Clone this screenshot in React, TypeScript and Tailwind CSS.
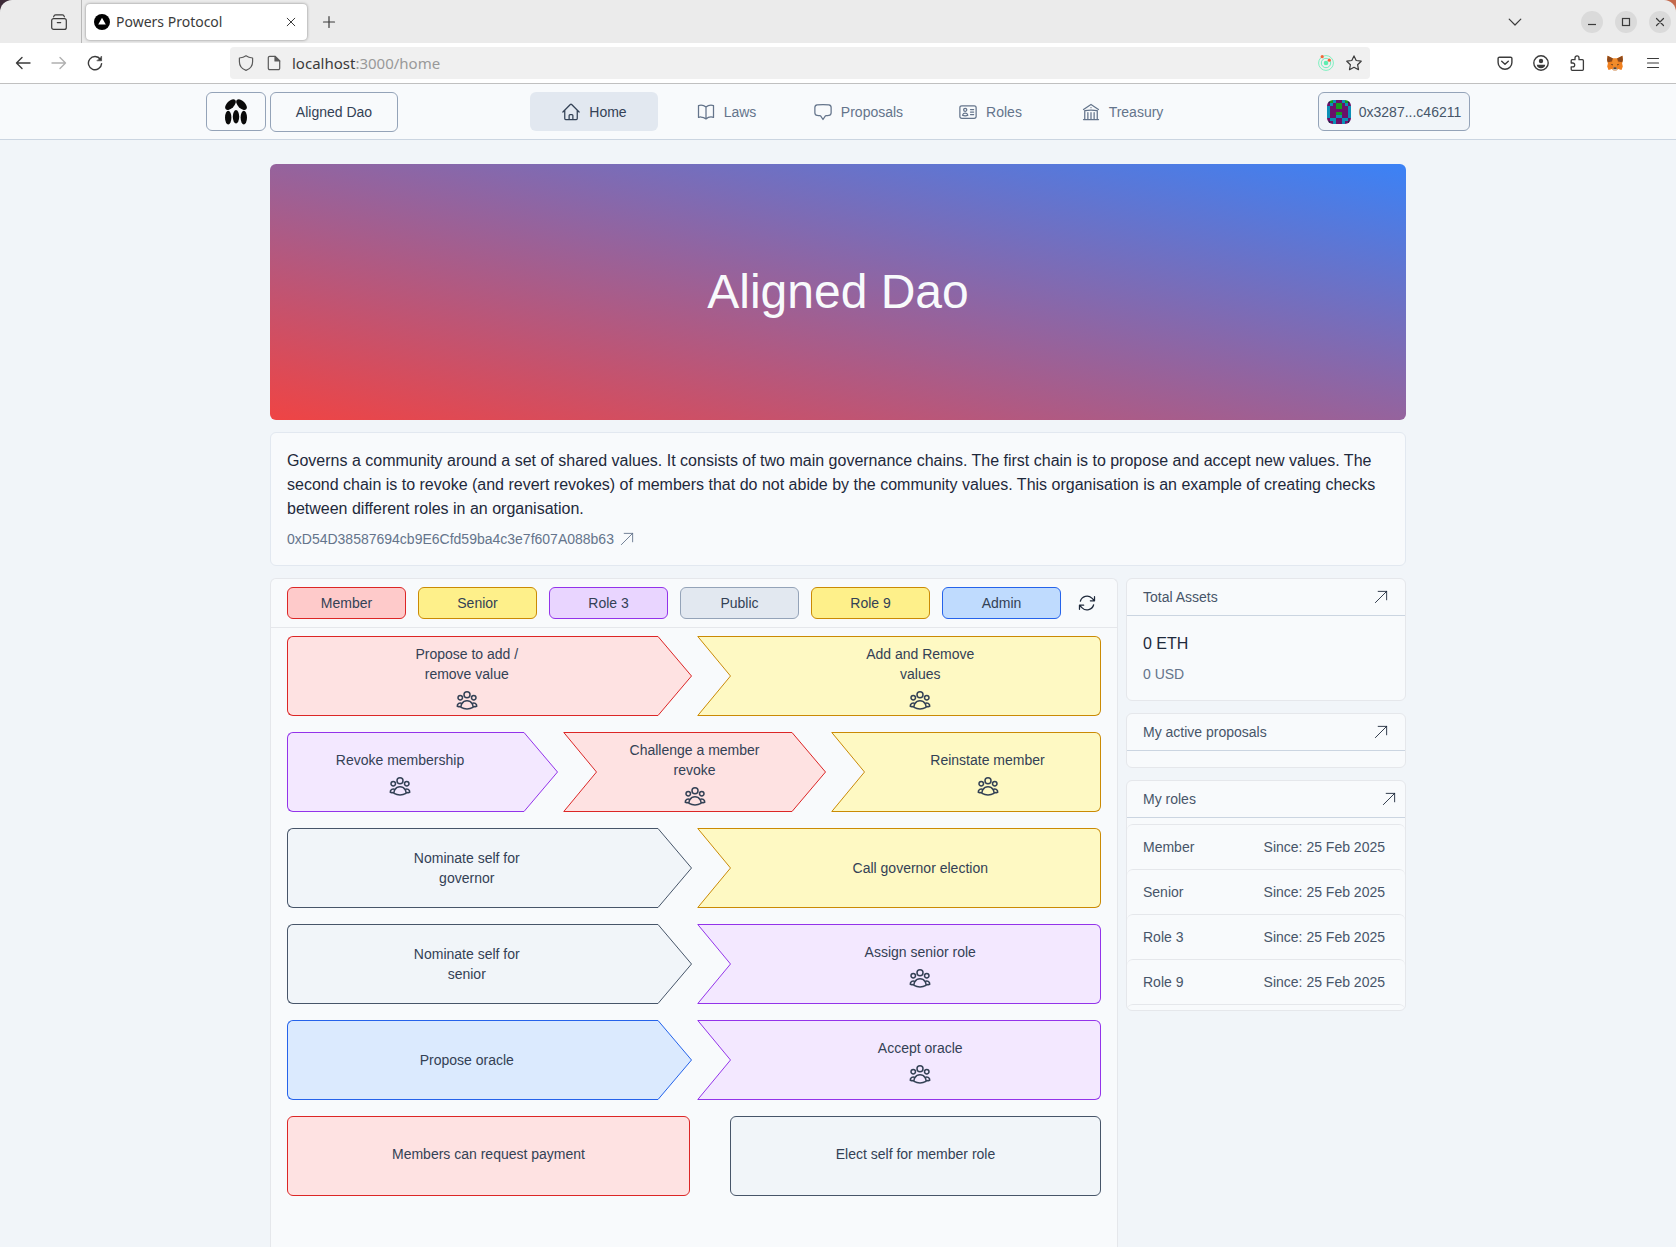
import type { ReactNode } from "react";
import {
  HiOutlineArrowPath,
  HiOutlineArrowUpRight,
  HiOutlineBookOpen,
  HiOutlineBuildingLibrary,
  HiOutlineChatBubbleBottomCenter,
  HiOutlineHome,
  HiOutlineIdentification,
  HiOutlineUserGroup,
} from "react-icons/hi2";

/* ---------- browser chrome ---------- */

function Glyph({ children, className = "" }: { children: ReactNode; className?: string }) {
  return (
    <svg
      viewBox="0 0 16 16"
      className={`size-4 shrink-0 ${className}`}
      fill="none"
      stroke="currentColor"
      strokeWidth="1.2"
      strokeLinecap="round"
      strokeLinejoin="round"
      aria-hidden="true"
    >
      {children}
    </svg>
  );
}

function ChromeButton({ label, children, className = "" }: { label: string; children: ReactNode; className?: string }) {
  return (
    <button type="button" aria-label={label} className={`flex shrink-0 items-center justify-center ${className}`}>
      {children}
    </button>
  );
}

function TabBar() {
  return (
    <div className="bg-linear-to-r from-[#3d2b38] to-[#c4694c]">
      <div className="flex h-[43px] items-center rounded-t-xl bg-[#ebebeb] text-[#3b3b3b]">
        <div className="flex h-full w-[82px] shrink-0 items-center justify-end border-r border-[#b8b8b8] pr-3.5">
          <ChromeButton label="Recent browsing" className="size-4">
            <Glyph>
              <rect x=".7" y="4.6" width="14.6" height="10.8" rx="2" />
              <path d="M2.6 2.8c.3-1 .9-1.9 2-1.9h6.8c1.1 0 1.7.9 2 1.9M6.3 8.6h3.4" />
            </Glyph>
          </ChromeButton>
        </div>
        <div className="ml-1 flex h-9 w-[221px] items-center rounded bg-white pr-2 pl-2 shadow-[0_0_3px_rgba(0,0,0,0.45)]">
          <svg viewBox="0 0 16 16" className="size-4 shrink-0" aria-hidden="true">
            <circle cx="8" cy="8" r="8" fill="#000" />
            <path d="M8 3.7 11.8 10.6H4.2z" fill="#fff" />
          </svg>
          <span className="ml-1.5 grow text-sm">Powers Protocol</span>
          <ChromeButton label="Close tab" className="size-4">
            <Glyph>
              <path d="M4.2 4.2 11.8 11.8M11.8 4.2 4.2 11.8" strokeWidth="1" />
            </Glyph>
          </ChromeButton>
        </div>
        <ChromeButton label="New tab" className="ml-3.5 size-4">
          <Glyph>
            <path d="M8 2.5v11M2.5 8h11" />
          </Glyph>
        </ChromeButton>
        <div className="ml-auto flex items-center pr-[5px]">
          <ChromeButton label="List all tabs" className="mr-[58px] size-4">
            <Glyph>
              <path d="M2.2 5.2 8 11l5.8-5.8" />
            </Glyph>
          </ChromeButton>
          <div className="flex gap-3">
            <ChromeButton label="Minimize" className="size-[22px] rounded-full bg-[#dadada]">
              <Glyph>
                <path d="M4 10.5h8" strokeLinecap="butt" />
              </Glyph>
            </ChromeButton>
            <ChromeButton label="Maximize" className="size-[22px] rounded-full bg-[#dadada]">
              <Glyph>
                <rect x="4.5" y="4.5" width="7" height="7" strokeLinejoin="miter" />
              </Glyph>
            </ChromeButton>
            <ChromeButton label="Close window" className="size-[22px] rounded-full bg-[#dadada]">
              <Glyph>
                <path d="m4.5 4.5 7 7M11.5 4.5l-7 7" />
              </Glyph>
            </ChromeButton>
          </div>
        </div>
      </div>
    </div>
  );
}

function FoxIcon() {
  return (
    <svg viewBox="0 0 16 16" className="size-4" aria-hidden="true">
      <path d="M.6.8 6 3.6h4L15.4.8l.5 4.2-.8 3.2.7 3.4-1.3 3.4-3.4-.9L9.4 15.6H6.6L4.9 14.1l-3.4.9L.2 11.6l.7-3.4L.1 5z" fill="#f0801f" />
      <path d="M.6.8 6 3.6 5 6.6.7 7.2.1 5zM15.4.8 10 3.6l1 3 4.3.6.6-2.2z" fill="#8d4a1c" />
      <path d="m6 3.6 4 0 .8 4.2-.6 3.6H5.8L5.200 7.800z" fill="#f08c2c" />
      <path d="m3.800 9 2 .3-.3 1.200zM12.200 9l-2 .3.300 1.200z" fill="#3a2b22" />
      <path d="M6.300 12.400 5.700 14l.9 1.500h2.800l.9-1.500-.6-1.600z" fill="#cfc0b4" />
      <path d="M6.700 12.400h2.600l.3 1.400H6.400z" fill="#1f1a17" />
    </svg>
  );
}

function Toolbar() {
  return (
    <div className="flex h-[41px] items-center border-b border-[#c0c0c0] bg-white text-[#3b3b3b]">
      <div className="flex w-[230px] shrink-0 items-center gap-5 pl-[15px]">
        <ChromeButton label="Back">
          <Glyph>
            <path d="M15 8H1.500M7 2.500 1.500 8 7 13.500" strokeWidth="1.400" />
          </Glyph>
        </ChromeButton>
        <ChromeButton label="Forward" className="text-[#b0b0b0]">
          <Glyph>
            <path d="M1 8h13.500M9 2.500 14.500 8 9 13.500" strokeWidth="1.400" />
          </Glyph>
        </ChromeButton>
        <ChromeButton label="Reload">
          <Glyph>
            <path d="M13.400 4.300A6.600 6.600 0 1 0 14.600 8.600" strokeWidth="1.400" />
            <path d="M14.600 1.400v4.400h-4.400z" fill="currentColor" stroke="currentColor" strokeWidth=".6" />
          </Glyph>
        </ChromeButton>
      </div>
      <div className="flex h-8 grow items-center rounded bg-[#f0f0f0] px-2">
        <Glyph className="text-[#5a5a5a]">
          <path d="M8 .8c2 1.500 4.200 2 6.600 2.200v3.800c0 3.900-2.600 7.200-6.600 8.600-4-1.400-6.600-4.700-6.600-8.600V3C3.800 2.800 6 2.300 8 .8z" />
        </Glyph>
        <Glyph className="ml-3 text-[#5a5a5a]">
          <path d="M3.700 1.300h5.500l4.500 4.500v7.500a1.400 1.400 0 0 1-1.400 1.400H3.700a1.400 1.400 0 0 1-1.400-1.400V2.700a1.400 1.400 0 0 1 1.400-1.400z" />
          <path d="M9 1.300v4.700h4.700z" fill="currentColor" />
        </Glyph>
        <div className="ml-2.5 grow text-[15px] leading-5">
          localhost<span className="text-[#999]">:3000/home</span>
        </div>
        <svg viewBox="0 0 16 16" className="size-4 shrink-0" fill="none" aria-hidden="true">
          <circle cx="8" cy="8" r="7.400" stroke="#7ff0c0" />
          <circle cx="8" cy="8" r="4.700" stroke="#6feec0" />
          <circle cx="8" cy="8" r="2.300" fill="#5fedb0" />
          <circle cx="4.200" cy="1.700" r="1.600" fill="#f2673a" />
          <circle cx="11.300" cy="5.200" r="1.600" fill="#f2673a" />
        </svg>
        <ChromeButton label="Bookmark this page" className="ml-3">
          <Glyph>
            <path d="m8 .9 2.200 4.600 5 .7-3.600 3.500.9 5L8 12.300l-4.500 2.400.9-5L.8 6.200l5-.7z" />
          </Glyph>
        </ChromeButton>
      </div>
      <div className="flex w-[306px] shrink-0 items-center justify-end gap-5 pr-[15px]">
        <ChromeButton label="Save to Pocket">
          <Glyph>
            <path d="M2.500 2.200h11a1.400 1.400 0 0 1 1.400 1.400v3.800a6.900 6.900 0 0 1-13.800 0V3.600a1.400 1.400 0 0 1 1.400-1.400z" strokeWidth="1.400" />
            <path d="M4.700 6.200 8 9.200l3.300-3" strokeWidth="1.400" />
          </Glyph>
        </ChromeButton>
        <ChromeButton label="Account">
          <Glyph>
            <circle cx="8" cy="8" r="7.200" strokeWidth="1.400" />
            <circle cx="8" cy="6" r="2.200" fill="currentColor" stroke="none" />
            <path d="M3.800 9.700h8.400c0 2-1.800 3.600-4.200 3.600s-4.200-1.600-4.200-3.600z" fill="currentColor" stroke="none" />
          </Glyph>
        </ChromeButton>
        <ChromeButton label="Extensions">
          <Glyph>
            <path
              d="M6 4.700V2.900a2 2 0 0 1 4 0v1.800h3.400c.6 0 1 .4 1 1v8.600c0 .6-.4 1-1 1H3.200c-.6 0-1-.4-1-1v-2.500h1.600a1.900 1.900 0 0 0 0-3.800H2.200V5.700c0-.6.4-1 1-1z"
              strokeWidth="1.300"
            />
          </Glyph>
        </ChromeButton>
        <ChromeButton label="Wallet extension" className="ml-0.5">
          <FoxIcon />
        </ChromeButton>
        <ChromeButton label="Menu" className="ml-0.5">
          <Glyph>
            <path d="M2.500 3.500h11M2.500 8h11M2.500 12.500h11" />
          </Glyph>
        </ChromeButton>
      </div>
    </div>
  );
}

/* ---------- application header ---------- */

function Logo() {
  return (
    <svg viewBox="0 0 22 26" className="h-[26px] w-[22px]" fill="#0a0a0a" aria-hidden="true">
      <ellipse cx="5.500" cy="5.600" rx="6.600" ry="3.600" transform="rotate(-45 5.500 5.600)" />
      <ellipse cx="16.500" cy="5.600" rx="6.600" ry="3.600" transform="rotate(45 16.500 5.600)" />
      <ellipse cx="3.200" cy="18.600" rx="3.200" ry="6.800" />
      <ellipse cx="11" cy="17.800" rx="3.200" ry="6.800" />
      <ellipse cx="18.800" cy="18.600" rx="3.200" ry="6.800" />
    </svg>
  );
}

const BLOCKS = ["dgtp", "ptpg", "tppg", "tppp", "tppg", "tppt", "pttp", "dptp"];
const BLOCK_COLOURS: Record<string, string> = { p: "#6a1069", t: "#0b8fb6", g: "#159a1f", d: "#2b1c4a" };

function Identicon() {
  return (
    <svg viewBox="0 0 8 8" className="size-6 shrink-0 rounded-md" shapeRendering="crispEdges" aria-hidden="true">
      {BLOCKS.map((half, y) =>
        (half + half.split("").reverse().join(""))
          .split("")
          .map((c, x) => <rect key={`${x}-${y}`} x={x} y={y} width="1" height="1" fill={BLOCK_COLOURS[c]} />),
      )}
    </svg>
  );
}

const NAV = [
  { label: "Home", Icon: HiOutlineHome, active: true },
  { label: "Laws", Icon: HiOutlineBookOpen },
  { label: "Proposals", Icon: HiOutlineChatBubbleBottomCenter },
  { label: "Roles", Icon: HiOutlineIdentification },
  { label: "Treasury", Icon: HiOutlineBuildingLibrary },
];

function AppHeader() {
  return (
    <header className="flex h-14 justify-center border-b border-[#cbd5e1] bg-[#f8fafc] px-4 pt-2 text-sm">
      <div className="flex w-full max-w-[1264px] items-start justify-between">
        <div className="flex gap-1">
          <a href="#start" aria-label="Start page" className="flex h-[39px] w-[60px] items-center justify-center rounded-md border border-[#94a3b8]">
            <Logo />
          </a>
          <button type="button" className="h-10 w-32 rounded-md border border-[#94a3b8] text-[#334155]">
            Aligned Dao
          </button>
        </div>
        <nav className="flex gap-1">
          {NAV.map(({ label, Icon, active }) => (
            <a
              key={label}
              href={`#${label.toLowerCase()}`}
              className={`flex h-[39px] w-32 items-center justify-center gap-2 rounded-md ${
                active ? "bg-[#e2e8f0] text-[#334155]" : "text-[#64748b]"
              }`}
            >
              <Icon className="size-5" />
              {label}
            </a>
          ))}
        </nav>
        <button
          type="button"
          className="flex h-[39px] w-[152px] items-center justify-center gap-2 rounded-md border border-[#94a3b8] bg-[#f1f5f9] text-[#475569]"
        >
          <Identicon />
          0x3287...c46211
        </button>
      </div>
    </header>
  );
}

/* ---------- law chains ---------- */

type Tone = "red" | "yellow" | "purple" | "slate" | "blue";
type Shape = "start" | "middle" | "end" | "box";
type Law = { title: string; tone: Tone; vote?: boolean };

const TONES: Record<Tone, { box: string; drawing: string }> = {
  red: { box: "bg-[#fee2e2] border-[#dc2626]", drawing: "fill-[#fee2e2] stroke-[#dc2626]" },
  yellow: { box: "bg-[#fef9c3] border-[#ca8a04]", drawing: "fill-[#fef9c3] stroke-[#ca8a04]" },
  purple: { box: "bg-[#f3e8ff] border-[#9333ea]", drawing: "fill-[#f3e8ff] stroke-[#9333ea]" },
  slate: { box: "bg-[#f1f5f9] border-[#475569]", drawing: "fill-[#f1f5f9] stroke-[#475569]" },
  blue: { box: "bg-[#dbeafe] border-[#2563eb]", drawing: "fill-[#dbeafe] stroke-[#2563eb]" },
};

const BODY: Record<Shape, string> = {
  start: "rounded-l-md border-y border-l pr-3",
  middle: "border-y",
  end: "rounded-r-md border-y border-r pl-2.5",
  box: "rounded-md border pb-1",
};

const CHAINS: Law[][] = [
  [
    { title: "Propose to add / remove value", tone: "red", vote: true },
    { title: "Add and Remove values", tone: "yellow", vote: true },
  ],
  [
    { title: "Revoke membership", tone: "purple", vote: true },
    { title: "Challenge a member revoke", tone: "red", vote: true },
    { title: "Reinstate member", tone: "yellow", vote: true },
  ],
  [
    { title: "Nominate self for governor", tone: "slate" },
    { title: "Call governor election", tone: "yellow" },
  ],
  [
    { title: "Nominate self for senior", tone: "slate" },
    { title: "Assign senior role", tone: "purple", vote: true },
  ],
  [
    { title: "Propose oracle", tone: "blue" },
    { title: "Accept oracle", tone: "purple", vote: true },
  ],
];

function LawItem({ law, shape }: { law: Law; shape: Shape }) {
  const tone = TONES[law.tone];
  return (
    <button type="button" className="flex h-20 min-w-0 text-sm text-[#334155]">
      {(shape === "middle" || shape === "end") && (
        <svg viewBox="0 0 34 80" className={`h-20 w-[34px] shrink-0 ${tone.drawing}`} aria-hidden="true">
          <path d="M0 0H34V80H0L34 40Z" stroke="none" />
          <path d="M34 .5H.8L33.500 40 .8 79.500H34" fill="none" />
        </svg>
      )}
      <span className={`flex h-20 grow flex-col items-center justify-center ${tone.box} ${BODY[shape]}`}>
        <span className={`flex flex-col items-center gap-1 ${law.vote ? "pt-1" : ""}`}>
          <span className={shape === "box" ? "" : "w-[140px]"}>{law.title}</span>
          {law.vote && <HiOutlineUserGroup className="size-6" />}
        </span>
      </span>
      {(shape === "start" || shape === "middle") && (
        <svg viewBox="0 0 34 80" className={`h-20 w-[34px] shrink-0 ${tone.drawing}`} aria-hidden="true">
          <path d="M0 0 33.500 40 0 80Z" stroke="none" />
          <path d="M0 .5 33.500 40 0 79.500" fill="none" />
        </svg>
      )}
    </button>
  );
}

const ROLE_FILTERS = [
  { label: "Member", style: "bg-[#fecaca] border-[#dc2626]" },
  { label: "Senior", style: "bg-[#fef08a] border-[#ca8a04]" },
  { label: "Role 3", style: "bg-[#e9d5ff] border-[#9333ea]" },
  { label: "Public", style: "bg-[#e2e8f0] border-[#94a3b8]" },
  { label: "Role 9", style: "bg-[#fef08a] border-[#ca8a04]" },
  { label: "Admin", style: "bg-[#bfdbfe] border-[#2563eb]" },
];

function LawsPanel() {
  return (
    <section className="flex min-w-0 grow flex-col rounded-t-md border border-b-0 border-[#e5e7eb] bg-[#f8fafc]">
      <div className="flex gap-3 border-b border-[#e5e7eb] px-4 py-2">
        {ROLE_FILTERS.map(({ label, style }) => (
          <button key={label} type="button" className={`h-8 flex-1 rounded-md border text-sm text-[#334155] ${style}`}>
            {label}
          </button>
        ))}
        <button type="button" aria-label="Refresh" className="flex h-8 w-7 items-center justify-center text-[#1e293b]">
          <HiOutlineArrowPath className="size-5" />
        </button>
      </div>
      <div className="flex flex-col gap-4 px-4 pt-2 pb-12">
        {CHAINS.map((laws) => (
          <div
            key={laws[0].title}
            className={`grid gap-[5px] ${laws.length === 3 ? "grid-cols-[271fr_263fr_270fr]" : "grid-cols-2"}`}
          >
            {laws.map((law, i) => (
              <LawItem key={law.title} law={law} shape={i === 0 ? "start" : i === laws.length - 1 ? "end" : "middle"} />
            ))}
          </div>
        ))}
        <div className="grid grid-cols-[403fr_371fr] gap-10">
          <LawItem law={{ title: "Members can request payment", tone: "red" }} shape="box" />
          <LawItem law={{ title: "Elect self for member role", tone: "slate" }} shape="box" />
        </div>
      </div>
    </section>
  );
}

/* ---------- side column ---------- */

function SideCard({ title, inset = "pr-[15px]", children }: { title: string; inset?: string; children: ReactNode }) {
  return (
    <section className="overflow-hidden rounded-md border border-[#e5e7eb] bg-[#f8fafc] text-sm text-[#475569]">
      <a href="#more" className={`flex h-[37px] items-center justify-between border-b border-[#cbd5e1] pl-4 ${inset}`}>
        {title}
        <HiOutlineArrowUpRight className="size-[18px] text-[#1e293b]" strokeWidth={1.2} />
      </a>
      {children}
    </section>
  );
}

function SideColumn() {
  return (
    <aside className="flex w-[280px] shrink-0 flex-col gap-3">
      <SideCard title="Total Assets">
        <div className="flex flex-col gap-2 p-4">
          <p className="text-base text-[#1e293b]">0 ETH</p>
          <p className="text-[#64748b]">0 USD</p>
        </div>
      </SideCard>
      <SideCard title="My active proposals">
        <div className="h-4" />
      </SideCard>
      <SideCard title="My roles" inset="pr-[7px]">
        <ul className="pt-1.5">
          {["Member", "Senior", "Role 3", "Role 9"].map((role) => (
            <li key={role} className="flex h-[45px] items-center justify-between rounded-t-md border-t border-[#e5e7eb] pr-5 pl-4">
              <span>{role}</span>
              <span>Since: 25 Feb 2025</span>
            </li>
          ))}
        </ul>
        <div className="h-1.5 rounded-t-md border-t border-[#e5e7eb]" />
      </SideCard>
    </aside>
  );
}

export default function App() {
  return (
    <div className="flex min-h-screen flex-col bg-[#f1f5f9] font-['Liberation_Sans',Arial,sans-serif]">
      <div className="font-['Noto_Sans',sans-serif]">
        <TabBar />
        <Toolbar />
      </div>
      <AppHeader />
      <main className="mx-auto flex w-full max-w-[1136px] grow flex-col gap-3 pt-6">
        <div className="flex h-64 items-center justify-center rounded-md bg-linear-to-tr/srgb from-[#ef4444] to-[#3b82f6]">
          <h1 className="text-5xl text-[#f8fafc]">Aligned Dao</h1>
        </div>
        <section className="flex flex-col gap-2 rounded-md border border-[#e2e8f0] bg-[#f8fafc] p-4">
          <p className="text-base text-[#1e293b]">
            Governs a community around a set of shared values. It consists of two main governance chains. The first chain
            is to propose and accept new values. The second chain is to revoke (and revert revokes) of members that do not
            abide by the community values. This organisation is an example of creating checks between different roles in
            an organisation.
          </p>
          <a href="#contract" className="flex items-center gap-1 self-start text-sm text-[#64748b]">
            0xD54D38587694cb9E6Cfd59ba4c3e7f607A088b63
            <HiOutlineArrowUpRight className="size-[18px]" strokeWidth={1.2} />
          </a>
        </section>
        <div className="flex grow gap-2">
          <LawsPanel />
          <div className="shrink-0">
            <SideColumn />
          </div>
        </div>
      </main>
    </div>
  );
}
